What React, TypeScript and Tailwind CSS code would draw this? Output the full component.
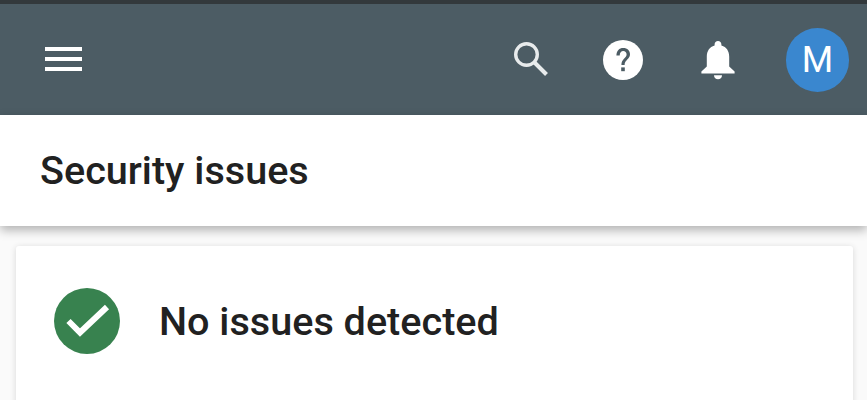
export default function App() {
  return (
    <div className="w-[867px] h-[400px] overflow-hidden bg-[#fafafa] font-['Roboto',sans-serif]">
      <div className="h-[4px] bg-[#33393c]" />
      <header className="h-[111px] bg-[#4c5c64] flex items-center pl-[45px] pr-[18px]">
        <svg width="37" height="25" viewBox="0 0 37 25" className="mt-[-1px]">
          <rect x="0" y="0" width="37" height="4" fill="#fff" />
          <rect x="0" y="10" width="37" height="4" fill="#fff" />
          <rect x="0" y="20" width="37" height="4" fill="#fff" />
        </svg>
        <div className="ml-auto flex items-center">
          <svg width="36" height="36" viewBox="0 0 36 36" className="mt-[-1px]">
            <circle cx="13.5" cy="13.5" r="10.8" fill="none" stroke="#e8ebec" strokeWidth="3.4" />
            <path d="M21.5 21.5 L33.5 33.5" stroke="#e8ebec" strokeWidth="4" />
          </svg>
          <svg width="40" height="40" viewBox="0 0 40 40" className="ml-[54px]">
            <circle cx="20" cy="20" r="20" fill="#fff" />
            <path d="M13.4 15.4 C13.6 10.6 16.2 8 20.2 8 C24.4 8 27 10.6 27 14.2 C27 19.2 21.6 19.8 21.6 25 H18.4 C18.4 18.6 23.6 18.2 23.6 14.4 C23.6 12.4 22.2 11 20.2 11 C18.2 11 16.8 12.8 16.7 15.4 Z" fill="#4c5c64" />
            <rect x="18.2" y="27.4" width="3.6" height="3.8" fill="#4c5c64" />
          </svg>
          <svg width="34" height="40" viewBox="0 0 34 40" className="ml-[58px]">
            <path d="M17 1 C19 1 20.4 2.4 20.4 4.6 V5.6 C25.6 7 28.2 11.4 28.2 16.8 V26.4 L33.6 31.4 V33.4 H0.4 V31.4 L5.8 26.4 V16.8 C5.8 11.4 8.4 7 13.6 5.6 V4.6 C13.6 2.4 15 1 17 1 Z" fill="#fff" />
            <path d="M13 35.2 H21 C21 37.6 19.2 39.2 17 39.2 C14.8 39.2 13 37.6 13 35.2 Z" fill="#fff" />
          </svg>
          <div className="ml-[51px] w-[63px] h-[64px] rounded-full bg-[#3a87cf] flex items-center justify-center text-white text-[36px] leading-none">
            M
          </div>
        </div>
      </header>
      <div className="h-[111px] bg-white flex items-center pl-[40px] shadow-[0_4px_10px_rgba(0,0,0,0.3)] relative">
        <h1 className="text-[39.6px] font-medium text-[#212121] leading-none">Security issues</h1>
      </div>
      <main className="pt-[20px] px-[14px]">
        <div className="ml-[2px] w-[837px] h-[200px] bg-white rounded-[3px] shadow-[0_1px_6px_rgba(0,0,0,0.14)] flex items-start pl-[38px] pt-[42px]">
          <svg width="66" height="66" viewBox="0 0 66 66" className="shrink-0">
            <circle cx="33" cy="33" r="33" fill="#38824f" />
            <path d="M14.5 33 L26 44.5 L53 19" fill="none" stroke="#fff" strokeWidth="6" />
          </svg>
          <h2 className="ml-[39px] mt-[1px] text-[39.6px] font-medium text-[#212121] leading-[66px]">No issues detected</h2>
        </div>
      </main>
    </div>
  );
}
